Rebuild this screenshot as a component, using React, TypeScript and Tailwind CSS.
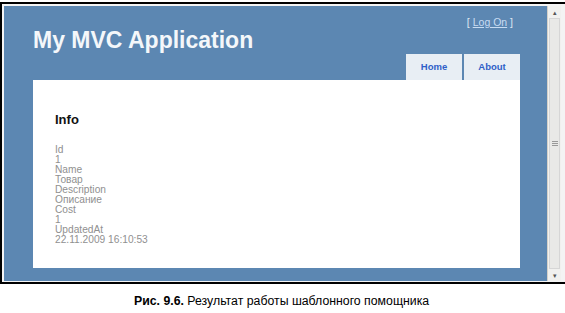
const fields = [
  'Id',
  '1',
  'Name',
  'Товар',
  'Description',
  'Описание',
  'Cost',
  '1',
  'UpdatedAt',
  '22.11.2009 16:10:53',
]

function Scrollbar() {
  return (
    <div className="flex w-[14px] flex-col border-l border-[#d4d0c8] bg-[#f1f1ef]">
      <div className="flex h-[12px] items-center justify-center text-[7px] leading-none text-[#555]">▴</div>
      <div className="relative mx-[1px] flex flex-1 items-center justify-center border border-[#d6d6d6] bg-[#e9e9e7]">
        <div className="flex w-[6px] flex-col gap-[1px]">
          <div className="h-px bg-[#999]" />
          <div className="h-px bg-[#999]" />
          <div className="h-px bg-[#999]" />
        </div>
      </div>
      <div className="flex h-[12px] items-center justify-center text-[7px] leading-none text-[#555]">▾</div>
    </div>
  )
}

export default function App() {
  return (
    <div className="flex h-[313px] w-[565px] flex-col bg-white font-['Liberation_Sans',Arial,sans-serif]">
      <div className="mt-[2px] flex h-[282px] border-t-2 border-b-2 border-l-2 border-black bg-[#f4f4f4] pt-[2px] pb-[1px] pl-[2px]">
        <div className="flex w-[543px] flex-col bg-[#5c87b2] pr-[27px] pb-[13px] pl-[29px]">
          <div className="flex h-[74px] justify-between">
            <h1 className="pt-[21px] text-[23px] leading-[26px] font-bold text-[#f4f7fa]">My MVC Application</h1>
            <div className="flex flex-col items-end">
              <div className="pt-[10px] pr-[7px] text-[10.5px] leading-[13px] text-[#dfe8f2]">
                [ <span className="text-[#c8dcf2] underline">Log On</span> ]
              </div>
              <div className="mt-auto flex gap-[2px]">
                <div className="flex h-[26px] w-[56px] items-center justify-center bg-[#e8eef4] text-[9.5px] font-bold text-[#2f5fc8]">
                  Home
                </div>
                <div className="flex h-[26px] w-[56px] items-center justify-center bg-[#e8eef4] text-[9.5px] font-bold text-[#2f5fc8]">
                  About
                </div>
              </div>
            </div>
          </div>
          <main className="flex-1 bg-white pt-[32px] pl-[22px]">
            <h2 className="text-[13px] leading-[16px] font-bold text-[#111]">Info</h2>
            <div className="mt-[17px] flex flex-col text-[10.2px] leading-[10px] text-[#909090]">
              {fields.map((f, i) => (
                <div key={i}>{f}</div>
              ))}
            </div>
          </main>
        </div>
        <Scrollbar />
      </div>
      <p className="mt-[10px] pl-[134px] text-[12.3px] leading-[14px] text-black">
        <span className="font-bold">Рис. 9.6.</span> Результат работы шаблонного помощника
      </p>
    </div>
  )
}
